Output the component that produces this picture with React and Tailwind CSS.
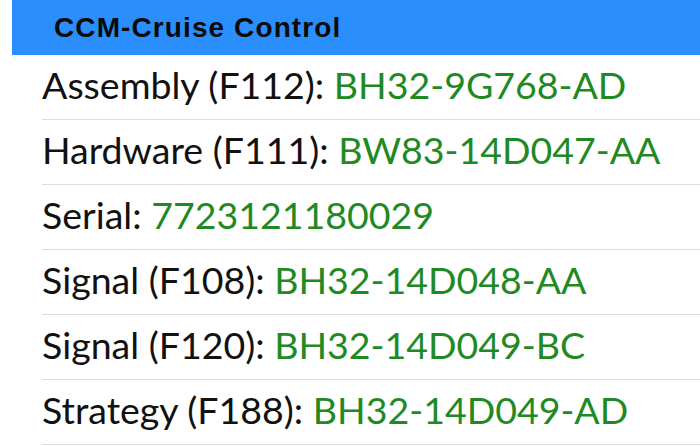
const ROWS = [
  { label: "Assembly (F112):", value: "BH32-9G768-AD" },
  { label: "Hardware (F111):", value: "BW83-14D047-AA" },
  { label: "Serial:", value: "7723121180029" },
  { label: "Signal (F108):", value: "BH32-14D048-AA" },
  { label: "Signal (F120):", value: "BH32-14D049-BC" },
  { label: "Strategy (F188):", value: "BH32-14D049-AD" },
];

export default function App() {
  return (
    <div className="w-[700px] h-[446px] overflow-hidden bg-white">
      <div className="ml-[12px] h-[55px] bg-[#2a8ffd] flex items-center pl-[42px]">
        <span className="text-[28px] font-bold text-[#0a0a0a] font-['Liberation_Sans',Arial,sans-serif] tracking-[1.1px]">
          CCM-Cruise Control
        </span>
      </div>
      <div className="font-['Lato','Open_Sans',sans-serif]">
        {ROWS.map((r) => (
          <div key={r.label} className="ml-[42px] h-[65px] border-b border-[#dcdcdc] flex items-center">
            <span className="text-[37.5px] text-[#111] pb-[3px]">
              {r.label} <span className="text-[#1f8a24]">{r.value}</span>
            </span>
          </div>
        ))}
      </div>
    </div>
  );
}
